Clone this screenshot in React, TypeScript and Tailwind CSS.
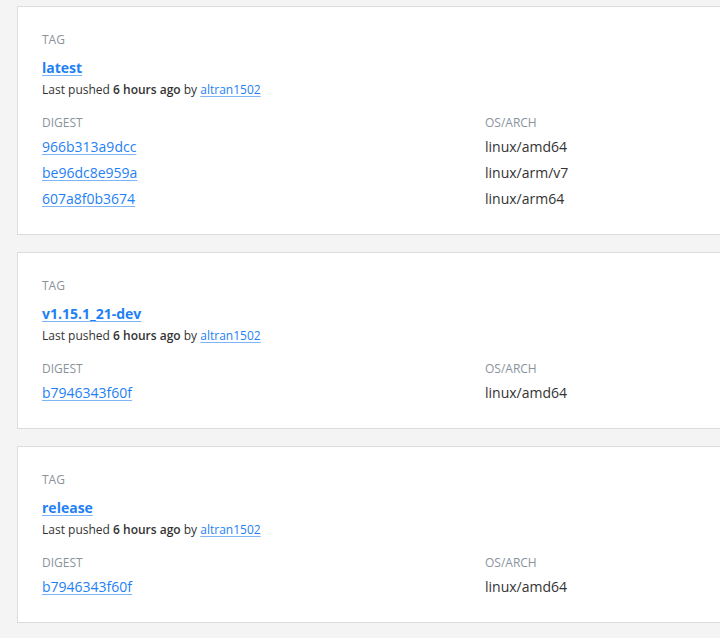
const tags = [
  {
    name: "latest",
    user: "altran1502",
    images: [
      { digest: "966b313a9dcc", arch: "linux/amd64" },
      { digest: "be96dc8e959a", arch: "linux/arm/v7" },
      { digest: "607a8f0b3674", arch: "linux/arm64" },
    ],
  },
  {
    name: "v1.15.1_21-dev",
    user: "altran1502",
    images: [{ digest: "b7946343f60f", arch: "linux/amd64" }],
  },
  {
    name: "release",
    user: "altran1502",
    images: [{ digest: "b7946343f60f", arch: "linux/amd64" }],
  },
];

const App = () => {
  return (
    <div
      className="min-h-[638px] w-[720px] overflow-hidden bg-[#f4f4f4] pt-[6px]"
      style={{ fontFamily: '"Open Sans", "Noto Sans", sans-serif' }}
    >
      <div className="flex flex-col gap-[17px]">
        {tags.map((tag) => (
          <div
            key={tag.name}
            className="ml-[17px] border border-r-0 border-[#dcdcdc] bg-white pt-[25px] pb-[22px] pl-[24px]"
          >
            <p className="text-[12px] leading-[16px] text-[#8a939b]">TAG</p>
            <a href="#" className="mt-[10px] block w-fit text-[14px] font-bold leading-[20px] text-[#1f7ff5] underline underline-offset-2 decoration-[#7fb5f7]">
              {tag.name}
            </a>
            <p className="mt-[4px] text-[12px] leading-[16px] text-[#333]">
              Last pushed <span className="font-semibold">6 hours ago</span> by{" "}
              <a href="#" className="text-[#1f7ff5] underline underline-offset-2 decoration-[#7fb5f7]">
                {tag.user}
              </a>
            </p>
            <div className="mt-[17px] flex text-[12px] leading-[16px] text-[#8a939b]">
              <span className="w-[443px]">DIGEST</span>
              <span>OS/ARCH</span>
            </div>
            <div className="mt-[3px]">
              {tag.images.map((img) => (
                <div key={img.digest + img.arch} className="flex text-[14px] leading-[26px]">
                  <span className="w-[443px]">
                    <a href="#" className="text-[#1f7ff5] underline underline-offset-2 decoration-[#7fb5f7]">
                      {img.digest}
                    </a>
                  </span>
                  <span className="text-[#333]">{img.arch}</span>
                </div>
              ))}
            </div>
          </div>
        ))}
      </div>
    </div>
  );
};

export default App;
